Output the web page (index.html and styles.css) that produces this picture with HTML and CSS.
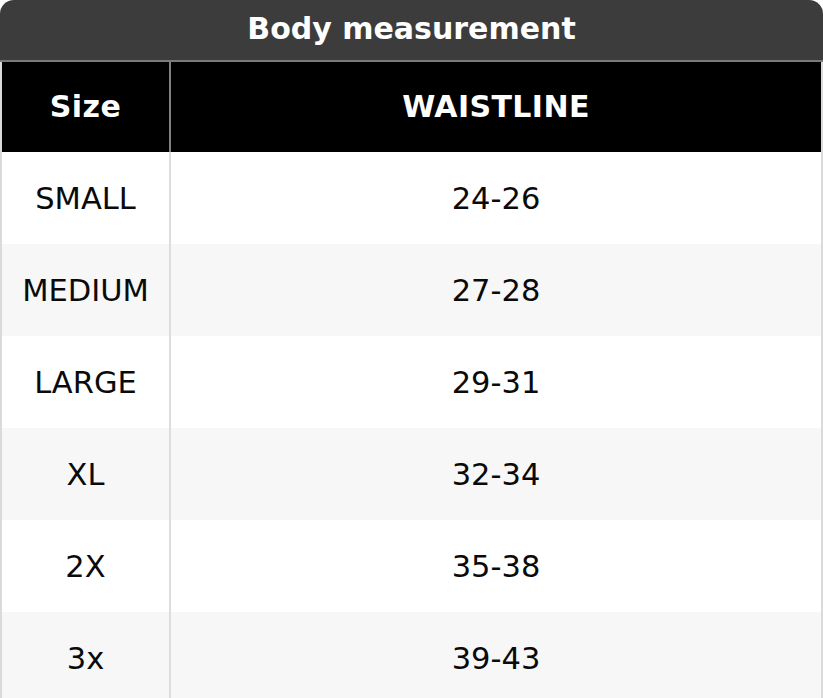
FILE: index.html
```html
<!DOCTYPE html>
<html>
<head>
<meta charset="utf-8">
<link rel="stylesheet" href="styles.css">
</head>
<body>
<div class="card">
  <div class="title">Body measurement</div>
  <div class="table">
    <div class="cell head left">Size</div>
    <div class="cell head">WAISTLINE</div>
    <div class="cell left">SMALL</div>
    <div class="cell">24-26</div>
    <div class="cell left alt">MEDIUM</div>
    <div class="cell alt">27-28</div>
    <div class="cell left">LARGE</div>
    <div class="cell">29-31</div>
    <div class="cell left alt">XL</div>
    <div class="cell alt">32-34</div>
    <div class="cell left">2X</div>
    <div class="cell">35-38</div>
    <div class="cell left alt">3x</div>
    <div class="cell alt">39-43</div>
  </div>
</div>
</body>
</html>
```
FILE: styles.css
```css
html, body {
  margin: 0;
  padding: 0;
  background: #ffffff;
}
body {
  font-family: "DejaVu Sans", "Liberation Sans", sans-serif;
  width: 823px;
  height: 698px;
  overflow: hidden;
}
.card {
  width: 823px;
  border-radius: 14px 14px 0 0;
  overflow: hidden;
  background: #ffffff;
}
.title {
  height: 62px;
  background: #3c3c3c;
  color: #ffffff;
  font-weight: bold;
  font-size: 30px;
  display: flex;
  align-items: center;
  justify-content: center;
  border-bottom: 2px solid #7a7a7a;
  padding-bottom: 4px;
  box-sizing: border-box;
}
.table {
  display: grid;
  grid-template-columns: 169px 1fr;
  grid-template-rows: 90px repeat(6, 92px);
  border-left: 2px solid #dadada;
  border-right: 2px solid #dadada;
}
.cell {
  display: flex;
  align-items: center;
  justify-content: center;
  font-size: 30.5px;
  color: #0a0a0a;
  background: #ffffff;
}
.cell.alt {
  background: #f7f7f7;
}
.cell.left {
  border-right: 2px solid #dddddd;
}
.cell.head {
  background: #000000;
  color: #ffffff;
  font-weight: bold;
  font-size: 30px;
  letter-spacing: 0.4px;
  padding-bottom: 2px;
}
.cell.head.left {
  border-right: 2px solid #808080;
}
```
